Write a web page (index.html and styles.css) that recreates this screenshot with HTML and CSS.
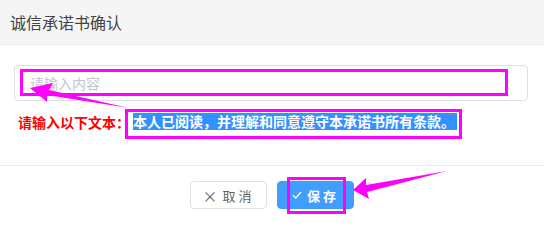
FILE: index.html
```html
<!DOCTYPE html>
<html lang="zh">
<head>
<meta charset="utf-8">
<link rel="stylesheet" href="styles.css">
</head>
<body>
<div class="dialog">
  <div class="header">诚信承诺书确认</div>
  <div class="content">
    <div class="input"><span class="placeholder">请输入内容</span></div>
    <div class="hint"><span class="label">请输入以下文本：</span><span class="sel">本人已阅读，并理解和同意遵守本承诺书所有条款。</span></div>
  </div>
  <div class="footer">
    <button class="btn btn-cancel"><span class="ico">×</span>取消</button>
    <button class="btn btn-save"><svg class="check" viewBox="0 0 10 10" width="10" height="10"><path d="M1 5.2 L3.8 8 L9 2" fill="none" stroke="#fff" stroke-width="1.3"/></svg>保存</button>
  </div>
  <svg class="annot" width="544" height="216" viewBox="0 0 544 216">
    <rect x="21.5" y="70.5" width="485" height="24" fill="none" stroke="#ff00ff" stroke-width="3"/>
    <rect x="126.5" y="110.5" width="334" height="27" fill="none" stroke="#ff00ff" stroke-width="3"/>
    <rect x="288.5" y="178.5" width="56" height="34" fill="none" stroke="#ff00ff" stroke-width="3"/>
    <polygon points="30,88 53,83 49,90 129,108 47,95 47,102" fill="#ff00ff"/>
    <polygon points="353,190 366,178 366,185 447,171 367,192 369,199" fill="#ff00ff"/>
  </svg>
</div>
</body>
</html>
```
FILE: styles.css
```css
* { box-sizing: border-box; }
html, body { margin: 0; padding: 0; background: #fff; }
body { font-family: "Noto Sans CJK SC", "Noto Sans", sans-serif; }
.dialog { position: relative; width: 544px; height: 216px; overflow: hidden; }
.header {
  height: 45px;
  background: #f5f5f5;
  border-bottom: 1px solid #e8e8e8;
  padding-left: 10px;
  font-size: 16px;
  line-height: 44px;
  color: #444;
}
.content {
  padding: 20px 16px 0 14px;
  height: 121px;
  border-bottom: 1px solid #ebebeb;
}
.input {
  height: 36px;
  border: 1px solid #dcdfe6;
  border-radius: 4px;
  padding-left: 15px;
  display: flex;
  align-items: center;
}
.placeholder { font-size: 14px; color: #c0c4cc; }
.hint {
  margin-top: 12px;
  padding-left: 4px;
  display: flex;
  align-items: center;
  font-size: 14px;
  font-weight: bold;
  height: 17px;
}
.label { color: #ff0000; margin-right: 3px; }
.sel {
  background: #3390ff;
  color: #fff;
  height: 17px;
  line-height: 17px;
  padding-right: 2px;
}
.footer {
  display: flex;
  justify-content: center;
  gap: 10px;
  padding-top: 15px;
}
.btn {
  height: 28px;
  width: 77px;
  border-radius: 4px;
  font-family: "Noto Sans CJK SC", sans-serif;
  font-size: 13px;
  letter-spacing: 3px;
  display: flex;
  align-items: center;
  justify-content: center;
  padding: 0;
  cursor: pointer;
}
.btn-cancel { background: #fff; border: 1px solid #dcdfe6; color: #606266; }
.btn-save { background: #409eff; border: 1px solid #409eff; color: #fff; font-weight: bold; }
.ico { font-size: 15px; margin-right: 2px; font-weight: normal; }
.check { margin-right: 5px; }
.annot { position: absolute; left: 0; top: 0; pointer-events: none; }
```
